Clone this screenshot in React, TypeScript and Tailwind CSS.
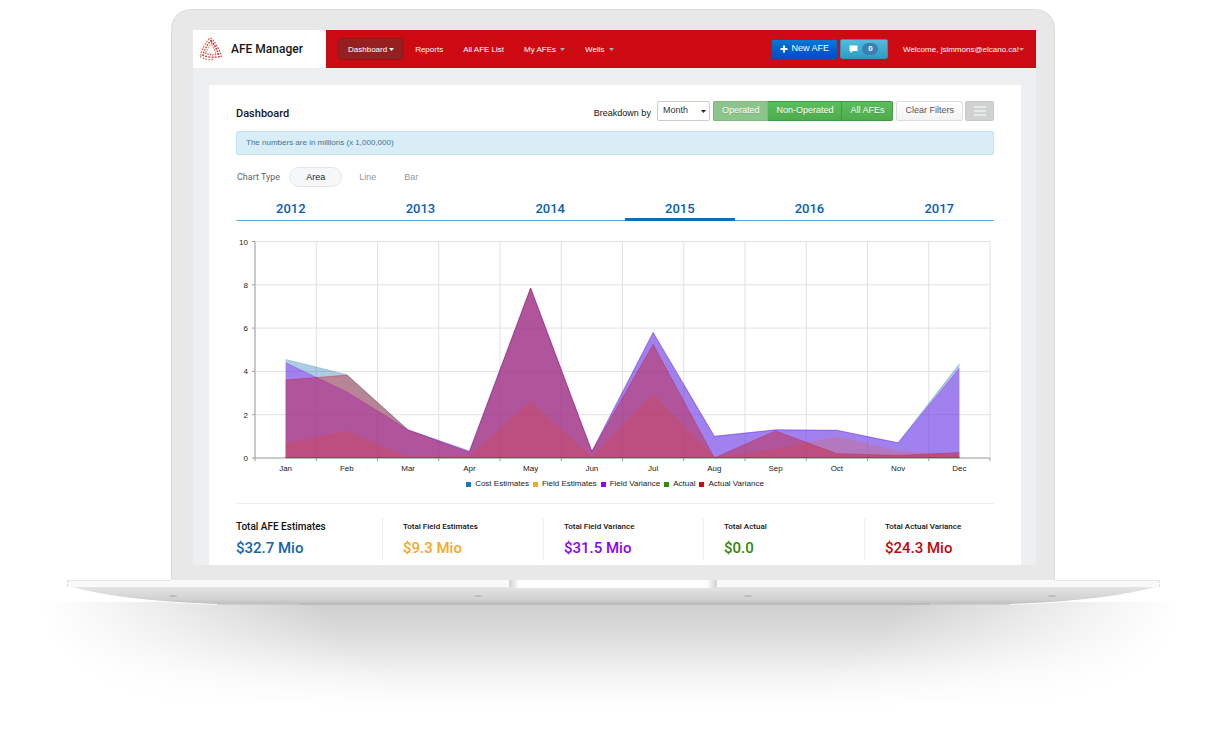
import React, { useState } from 'react';
import clsx from 'clsx';

const navItems = [
  { label: 'Dashboard', menu: true },
  { label: 'Reports', menu: false },
  { label: 'All AFE List', menu: false },
  { label: 'My AFEs', menu: true },
  { label: 'Wells', menu: true },
];

const filters = ['Operated', 'Non-Operated', 'All AFEs'];
const chartTypes = ['Area', 'Line', 'Bar'];
const years = [2012, 2013, 2014, 2015, 2016, 2017];
const months = ['Jan', 'Feb', 'Mar', 'Apr', 'May', 'Jun', 'Jul', 'Aug', 'Sep', 'Oct', 'Nov', 'Dec'];

const series = [
  { name: 'Cost Estimates', color: '#1f78b4', data: [4.55, 3.85, 1.3, 0.32, 7.85, 0.3, 5.8, 1, 1.3, 1.28, 0.7, 4.35] },
  { name: 'Field Estimates', color: '#faa51e', data: [0.65, 1.25, 0.03, 0.05, 2.6, 0.03, 2.95, 0, 0.4, 0.97, 0.3, 0.1] },
  { name: 'Field Variance', color: '#9000ff', data: [4.4, 3.05, 1.3, 0.3, 7.85, 0.3, 5.8, 1, 1.3, 1.28, 0.7, 4.15] },
  { name: 'Actual', color: '#338a0d', data: [0, 0, 0, 0, 0, 0, 0, 0, 0, 0, 0, 0] },
  { name: 'Actual Variance', color: '#cc0a12', data: [3.6, 3.83, 1.28, 0.25, 7.85, 0.3, 5.25, 0, 1.25, 0.2, 0.12, 0.25] },
];

const totals = [
  { label: 'Total AFE Estimates', value: '$32.7 Mio', color: 'text-[#0f66ad]' },
  { label: 'Total Field Estimates', value: '$9.3 Mio', color: 'text-[#f7a81f]' },
  { label: 'Total Field Variance', value: '$31.5 Mio', color: 'text-[#8c00ff]' },
  { label: 'Total Actual', value: '$0.0', color: 'text-[#2f860b]' },
  { label: 'Total Actual Variance', value: '$24.3 Mio', color: 'text-[#c4040c]' },
];

function Caret({ className }: { className?: string }) {
  return (
    <svg viewBox="0 0 5 3" className={clsx('w-[5px] h-[3px] shrink-0', className)} aria-hidden="true">
      <path d="M0 0H5L2.5 3Z" fill="currentColor" />
    </svg>
  );
}

function Logo() {
  return (
    <svg viewBox="0 0 24 24" className="w-6 h-6" fill="none" aria-hidden="true">
      <g strokeWidth="1.3">
        <path d="M10.500 1.500Q3.500 9 1.500 18.500" stroke="#ef6a4f" strokeDasharray="2 1" />
        <path d="M12.500 3Q6 10 4 18" stroke="#d21a1a" strokeDasharray="1.500 1.300" />
        <path d="M13 6Q8.500 10.500 6.500 16.500" stroke="#f0937a" strokeDasharray="1.500 1" />
        <path d="M11.500 1Q15 3 17 8Q21 13 22.500 20" stroke="#b35050" strokeDasharray="1.500 1.500" />
        <path d="M12 4Q17.500 10 19.500 18" stroke="#cf1717" strokeDasharray="1.800 1" />
        <path d="M12.500 7.500Q16 12 17 17.500" stroke="#ee7a68" strokeDasharray="1.500 1.300" />
        <path d="M1 19.500Q8 24 15.500 22" stroke="#c06a6a" strokeDasharray="1.500 1.500" />
        <path d="M3 18Q11 21.500 22.500 19.500" stroke="#d83030" strokeDasharray="2 1.300" />
        <path d="M6 16Q12 19 19.500 17" stroke="#ef5a41" strokeDasharray="1.500 1" />
      </g>
    </svg>
  );
}

function Header() {
  return (
    <header className="flex h-[38px] bg-[#cd0a11] text-white">
      <a href="#" className="flex w-[133px] shrink-0 items-center gap-2 bg-white pl-1.5 font-['Roboto',sans-serif] text-[12px] font-medium text-[#16161c]">
        <Logo />
        AFE Manager
      </a>

      <nav className="flex flex-1 items-center gap-0.5 pl-3 text-[8px]">
        {navItems.map((item, i) => (
          <a
            key={item.label}
            href="#"
            className={clsx(
              'flex h-[22px] items-center rounded-[3px] px-[9px] pt-px',
              i === 0 ? 'gap-0.5 border border-[#8a1a1d] bg-[#96201f]' : 'gap-1'
            )}
          >
            {item.label}
            {item.menu && <Caret className={i === 0 ? 'text-white' : 'text-[#8fb9c4]'} />}
          </a>
        ))}
      </nav>

      <div className="flex items-center gap-0.5 pr-3">
        <button className="flex h-5 items-center gap-[3px] rounded-[2px] border border-[#0a52b4] bg-linear-to-b from-[#0b79d0] to-[#0549cc] px-2 text-[9px] font-medium">
          <svg viewBox="0 0 8 8" className="size-2" aria-hidden="true">
            <path d="M3 0.500H5V3H7.500V5H5V7.500H3V5H0.500V3H3Z" fill="currentColor" />
          </svg>
          New AFE
        </button>
        <button aria-label="Messages" className="flex h-5 w-12 items-center justify-center gap-1 rounded-[2px] border border-[#2f93b8] bg-linear-to-b from-[#53bbdc] to-[#2d9dc4]">
          <svg viewBox="0 0 9 8" className="h-2 w-[9px]" aria-hidden="true">
            <path d="M0.500 0.500H8.500V6H4L1.500 8V6H0.500Z" fill="currentColor" />
          </svg>
          <span className="flex h-3 w-4 items-center justify-center rounded-full bg-[#3a7fb3] text-[8px] font-bold">0</span>
        </button>
        <a href="#" className="ml-[13px] flex items-center pt-px text-[8px]">
          Welcome, jsimmons@elcano.ca!
          <Caret className="text-[#c9a0a2]" />
        </a>
      </div>
    </header>
  );
}

function AreaChart() {
  const left = 19;
  const width = 735;
  const bottom = 226;
  const unit = 21.65;
  const step = width / months.length;
  const x = (i: number) => left + step * (i + 0.5);
  const y = (v: number) => bottom - v * unit;

  return (
    <svg viewBox="0 0 758 243" className="w-full" role="img" aria-label="Monthly estimates and variance" fontFamily="Liberation Sans, sans-serif" fontSize="8">
      {[0, 2, 4, 6, 8, 10].map((v) => (
        <g key={v}>
          <line x1={left} x2={left + width} y1={y(v)} y2={y(v)} stroke="#e2e2e2" />
          <line x1={left - 3} x2={left} y1={y(v)} y2={y(v)} stroke="#999" />
          <text x={left - 7} y={y(v) + 3} textAnchor="end" fill="#222">{v}</text>
        </g>
      ))}
      {Array.from({ length: 13 }, (_, i) => (
        <g key={i}>
          <line x1={left + step * i} x2={left + step * i} y1={y(10)} y2={bottom} stroke="#e0e0e0" />
          <line x1={left + step * i} x2={left + step * i} y1={bottom} y2={bottom + 3} stroke="#999" />
        </g>
      ))}
      <path d={`M${left} ${y(10)}V${bottom}H${left + width}`} fill="none" stroke="#a3a3a3" />
      {series.map((s) => {
        const line = s.data.map((v, i) => `${x(i)} ${y(v)}`).join('L');
        return (
          <g key={s.name}>
            <path d={`M${x(0)} ${bottom}L${line}L${x(11)} ${bottom}Z`} fill={s.color} opacity="0.37" />
            <path d={`M${line}`} fill="none" stroke={s.color} opacity="0.3" />
          </g>
        );
      })}
      <line x1={x(0)} x2={x(11)} y1={bottom - 0.5} y2={bottom - 0.5} stroke="#cc1f55" opacity="0.8" />
      {months.map((m, i) => (
        <text key={m} x={x(i)} y={bottom + 13} textAnchor="middle" fill="#222">{m}</text>
      ))}
    </svg>
  );
}

export default function App() {
  const [filter, setFilter] = useState('Operated');
  const [chartType, setChartType] = useState('Area');
  const [year, setYear] = useState(2015);

  return (
    <div className="min-h-screen bg-white pt-[9px] font-['Liberation_Sans',Arial,sans-serif] leading-normal">
      {/* Laptop lid */}
      <div className="ml-[171px] mr-[156px] rounded-t-[20px] border border-b-0 border-[#dcdcdc] bg-[#e8e8e8] pt-5 pr-[18px] pb-[15px] pl-[21px]">
        <div className="bg-[#edeff1]">
          <Header />

          <main className="pt-[17px] pr-[15px] pl-4">
            <div className="bg-white px-[27px] pt-4 pb-1">
              <div className="flex h-5 items-center">
                <h1 className="flex-1 pt-1.5 font-['Roboto',sans-serif] text-[11px] font-medium text-[#16161c]">Dashboard</h1>
                <label htmlFor="breakdown" className="pt-1.5 pr-1.5 text-[9px] text-[#111]">Breakdown by</label>
                <div className="relative">
                  <select id="breakdown" className="block h-5 w-[53px] appearance-none rounded-[2px] border border-[#ccc] bg-white pl-[5px] text-[9px] text-[#333]">
                    <option>Month</option>
                    <option>Quarter</option>
                    <option>Year</option>
                  </select>
                  <Caret className="pointer-events-none absolute top-[9px] right-1 text-[#222]" />
                </div>
                <div className="ml-[3px] flex overflow-hidden rounded-[2px]">
                  {filters.map((f) => (
                    <button
                      key={f}
                      onClick={() => setFilter(f)}
                      className={clsx(
                        'h-5 border border-l-0 px-2 text-[9px] text-white text-shadow-2xs first:border-l',
                        f === filter ? 'border-[#7fb87f] bg-[#8cc48c]' : 'border-[#3d9b3d] bg-linear-to-b from-[#5cbd5c] to-[#4dad4d]'
                      )}
                    >
                      {f}
                    </button>
                  ))}
                </div>
                <button className="ml-[3px] h-5 rounded-[2px] border border-[#ddd] bg-linear-to-b from-white to-[#f3f3f3] px-2 text-[9px] text-[#555]">Clear Filters</button>
                <button aria-label="Menu" className="ml-0.5 flex h-5 w-[29px] items-center justify-center rounded-[2px] border border-[#c6c8c8] bg-[#d0d2d2]">
                  <svg viewBox="0 0 12 10" className="h-2.5 w-3" aria-hidden="true">
                    <path d="M0 1H12M0 5H12M0 9H12" stroke="#fff" strokeWidth="1.2" />
                  </svg>
                </button>
              </div>

              <p className="mt-2.5 flex h-6 items-center rounded-[2px] border border-[#bfe4ef] bg-[#d9edf6] px-[9px] text-[8px] text-[#3e7397]">
                The numbers are in millions (x 1,000,000)
              </p>

              <div className="mt-3 flex h-5 items-center pl-px font-['Roboto',sans-serif] text-[9px] text-[#666]">
                <span className="mr-[9px] pt-px">Chart Type</span>
                {chartTypes.map((t) => (
                  <button
                    key={t}
                    onClick={() => setChartType(t)}
                    className={clsx(
                      'h-5 rounded-full border px-4 pt-px font-[Liberation_Sans] text-[9px]',
                      t === chartType ? 'border-[#e3e6e8] bg-[#f6f7f9] text-[#22222c]' : 'border-transparent pr-2.5 text-[#999]'
                    )}
                  >
                    {t}
                  </button>
                ))}
              </div>

              <div className="mt-2.5 grid grid-cols-6 gap-5 border-b border-[#5fb0dc]">
                {years.map((y) => (
                  <button
                    key={y}
                    onClick={() => setYear(y)}
                    className={clsx(
                      "-mb-px h-6 border-b-3 pt-0.5 font-['Roboto',sans-serif] text-[13px] leading-[18px] font-medium text-[#0560b5]",
                      y === year ? 'border-[#0871b8]' : 'border-transparent'
                    )}
                  >
                    {y}
                  </button>
                ))}
              </div>

              <div className="mt-[11px]">
                <AreaChart />
              </div>

              <ul className="mt-0.5 flex items-center justify-center gap-1 pt-px text-[8px] leading-3 text-[#222]">
                {series.map((s) => (
                  <li key={s.name} className="flex items-center gap-1">
                    <span className="size-[5px]" style={{ backgroundColor: s.color }} />
                    {s.name}
                  </li>
                ))}
              </ul>

              <dl className="mt-[13px] grid grid-cols-[146fr_161fr_160fr_161fr_130fr] border-t border-[#eee] pt-3.5 font-['Roboto',sans-serif] whitespace-nowrap">
                {totals.map((t, i) => (
                  <div key={t.label} className={clsx('h-[43px] border-[#eee]', i > 0 && 'border-l pl-5')}>
                    <dt className={clsx('leading-[18px] font-medium text-[#111]', i === 0 ? 'text-[10px]' : 'text-[8px]')}>{t.label}</dt>
                    <dd className={clsx('text-[15px] leading-6 font-medium', t.color)}>{t.value}</dd>
                  </div>
                ))}
              </dl>
            </div>
          </main>
        </div>
      </div>

      {/* Laptop base and its shadow */}
      <svg viewBox="0 0 1211 152" className="w-full" aria-hidden="true">
        <defs>
          <linearGradient id="shadow" x1="0" y1="0" x2="0" y2="1">
            <stop offset="0" stopColor="#cecece" />
            <stop offset="0.35" stopColor="#dedede" />
            <stop offset="0.7" stopColor="#f3f3f3" />
            <stop offset="1" stopColor="#ffffff" />
          </linearGradient>
          <radialGradient id="fade" gradientUnits="userSpaceOnUse" cx="0" cy="0" r="1" gradientTransform="translate(610 24) scale(570 190)">
            <stop offset="0" stopColor="#fff" />
            <stop offset="0.5" stopColor="#fff" />
            <stop offset="0.75" stopColor="#777" />
            <stop offset="0.9" stopColor="#2a2a2a" />
            <stop offset="1" stopColor="#000" />
          </radialGradient>
          <mask id="edges" maskUnits="userSpaceOnUse" x="0" y="0" width="1211" height="152">
            <rect width="1211" height="152" fill="url(#fade)" />
          </mask>
          <linearGradient id="body" x1="0" y1="0" x2="0" y2="1">
            <stop offset="0" stopColor="#e6e6e6" />
            <stop offset="0.7" stopColor="#d2d2d2" />
            <stop offset="1" stopColor="#bdbdbd" />
          </linearGradient>
          <linearGradient id="notch" x1="0" y1="0" x2="1" y2="0">
            <stop offset="0" stopColor="#cfcfcf" />
            <stop offset="0.05" stopColor="#fff" />
            <stop offset="0.95" stopColor="#fff" />
            <stop offset="1" stopColor="#cfcfcf" />
          </linearGradient>
        </defs>
        <rect x="0" y="22" width="1211" height="105" fill="url(#shadow)" mask="url(#edges)" />
        <path d="M67 6H1160Q1110 21 1010 24.500H217Q117 21 67 6Z" fill="url(#body)" />
        <path d="M67 6Q117 21 217 24.500M1160 6Q1110 21 1010 24.500" fill="none" stroke="#fff" />
        <path d="M300 24H930" stroke="#bbb" strokeWidth="2" />
        <rect x="67" y="0" width="1093" height="7" fill="#f9f9f9" />
        <path d="M67 0.500H171M1055 0.500H1160M67.500 0V7M1159.500 0V7" stroke="#e0e0e0" strokeDasharray="3 1" />
        <path d="M509 0H717V5Q717 8 713 8H513Q509 8 509 5Z" fill="url(#notch)" />
        {[173, 478, 748, 1052].map((cx) => (
          <ellipse key={cx} cx={cx} cy="16" rx="4" ry="1" fill="#bcbcbc" />
        ))}
      </svg>
    </div>
  );
}
